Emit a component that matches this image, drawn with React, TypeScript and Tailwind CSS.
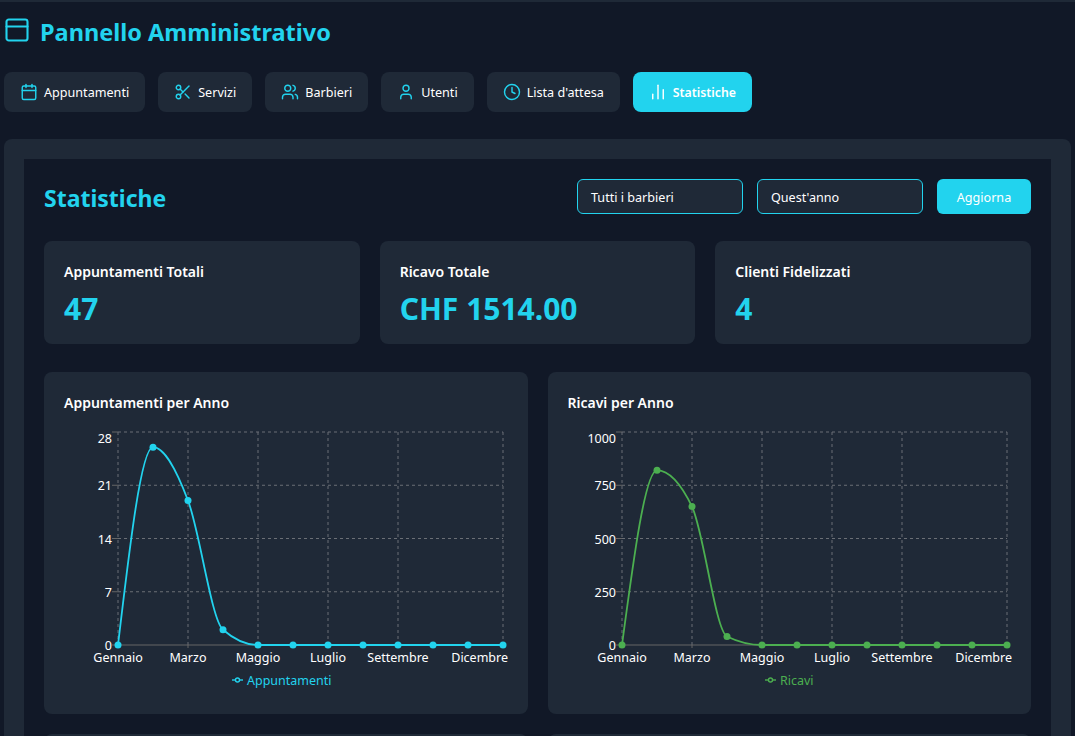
import { Calendar, ChartNoAxesColumn, Clock, PanelTop, Scissors, User, Users } from "lucide-react";

const tabs = [
  { label: "Appuntamenti", icon: Calendar },
  { label: "Servizi", icon: Scissors },
  { label: "Barbieri", icon: Users },
  { label: "Utenti", icon: User },
  { label: "Lista d'attesa", icon: Clock },
  { label: "Statistiche", icon: ChartNoAxesColumn, active: true },
];

const stats = [
  { label: "Appuntamenti Totali", value: "47" },
  { label: "Ricavo Totale", value: "CHF 1514.00" },
  { label: "Clienti Fidelizzati", value: "4" },
];

const PLOT_LEFT = 54;
const PLOT_TOP = 5;
const PLOT_W = 385;
const PLOT_H = 213;
const STEP = PLOT_W / 11;
const xLabels = [
  { i: 0, text: "Gennaio" },
  { i: 2, text: "Marzo" },
  { i: 4, text: "Maggio" },
  { i: 6, text: "Luglio" },
  { i: 8, text: "Settembre" },
  { i: 11, text: "Dicembre" },
];

// same shape as a monotone line chart (d3 curveMonotoneX)
function monotonePath(pts: { x: number; y: number }[]) {
  const n = pts.length;
  const slopes: number[] = [];
  for (let i = 0; i < n - 1; i++) {
    slopes.push((pts[i + 1].y - pts[i].y) / (pts[i + 1].x - pts[i].x));
  }
  const t: number[] = new Array(n).fill(0);
  for (let i = 1; i < n - 1; i++) {
    const a = slopes[i - 1];
    const b = slopes[i];
    const sign = (Math.sign(a) || 1) + (Math.sign(b) || 1);
    t[i] = sign * Math.min(Math.abs(a), Math.abs(b), 0.25 * Math.abs(a + b)) || 0;
  }
  t[0] = (3 * slopes[0] - t[1]) / 2;
  t[n - 1] = (3 * slopes[n - 2] - t[n - 2]) / 2;
  let d = `M${pts[0].x},${pts[0].y}`;
  for (let i = 0; i < n - 1; i++) {
    const h = (pts[i + 1].x - pts[i].x) / 3;
    d += `C${pts[i].x + h},${pts[i].y + h * t[i]} ${pts[i + 1].x - h},${pts[i + 1].y - h * t[i + 1]} ${pts[i + 1].x},${pts[i + 1].y}`;
  }
  return d;
}

function LineChartCard({
  title,
  name,
  color,
  max,
  ticks,
  data,
}: {
  title: string;
  name: string;
  color: string;
  max: number;
  ticks: number[];
  data: number[];
}) {
  const pts = data.map((v, i) => ({
    x: PLOT_LEFT + i * STEP,
    y: PLOT_TOP + PLOT_H - (v / max) * PLOT_H,
  }));
  const bottom = PLOT_TOP + PLOT_H;
  const right = PLOT_LEFT + PLOT_W;

  return (
    <div className="rounded-lg bg-[#1f2937] p-5">
      <h3 className="mb-[14px] pt-px text-[14px] leading-5 font-semibold text-white">{title}</h3>
      <svg width="444" height="267" className="block">
        {ticks.map((v) => {
          const y = bottom - (v / max) * PLOT_H;
          return (
            <g key={v}>
              {v > 0 && <line x1={PLOT_LEFT} x2={right} y1={y} y2={y} stroke="#6b6f76" strokeDasharray="3 3" />}
              <line x1={PLOT_LEFT - 6} x2={PLOT_LEFT} y1={y} y2={y} stroke="#666" />
              <text x={PLOT_LEFT - 6} y={y + (v === max ? 10.5 : 5)} textAnchor="end" fontSize="12.5" fill="#fff">
                {v}
              </text>
            </g>
          );
        })}
        {xLabels.map(({ i, text }) => {
          const x = PLOT_LEFT + i * STEP;
          return (
            <g key={text}>
              <line x1={x} x2={x} y1={PLOT_TOP} y2={bottom} stroke="#6b6f76" strokeDasharray="3 3" />
              <line x1={x} x2={x} y1={bottom} y2={bottom + 3} stroke="#666" />
              <text
                x={i === 11 ? 444 : x}
                y={bottom + 16.5}
                textAnchor={i === 11 ? "end" : "middle"}
                fontSize="12.5"
                fill="#fff"
              >
                {text}
              </text>
            </g>
          );
        })}
        <line x1={PLOT_LEFT} x2={right} y1={bottom} y2={bottom} stroke="#666" />
        <path d={monotonePath(pts)} fill="none" stroke={color} strokeWidth="1.8" />
        {pts.map((p, i) => (
          <circle key={i} cx={p.x} cy={p.y} r="3.5" fill={color} />
        ))}
        <g transform={`translate(${name === "Ricavi" ? 197 : 168} 253)`}>
          <line x1="0" x2="11" y1="0" y2="0" stroke={color} strokeWidth="1.4" />
          <circle cx="5.5" cy="0" r="2" fill="#1f2937" stroke={color} strokeWidth="1.4" />
          <text x="15" y="4.5" fontSize="12.5" fill={color}>
            {name}
          </text>
        </g>
      </svg>
    </div>
  );
}

export default function App() {
  return (
    <div
      className="h-[736px] overflow-hidden border-t-2 border-[#1f2937] bg-[#111827] px-1 text-white"
      style={{ fontFamily: '"Noto Sans", "Open Sans", sans-serif' }}
    >
      <header className="flex h-[60px] items-center gap-[9px]">
        <PanelTop className="-ml-[1px] mb-1 h-7 w-7 text-[#22d3ee]" strokeWidth={1.8} />
        <h1 className="pt-0.5 text-[23.5px] font-bold text-[#22d3ee]">Pannello Amministrativo</h1>
      </header>

      <nav className="mt-[10px] flex gap-[13px]">
        {tabs.map(({ label, icon: Icon, active }) => (
          <button
            key={label}
            className={`flex h-10 items-center gap-[6px] rounded-lg px-4 ${
              active ? "bg-[#22d3ee] text-[12.3px] font-semibold text-white" : "bg-[#1f2937] text-[12.6px] text-white"
            }`}
          >
            <Icon className={`h-[18px] w-[18px] ${active ? "text-white" : "text-[#22d3ee]"}`} strokeWidth={1.9} />
            <span className="pt-0.5">{label}</span>
          </button>
        ))}
      </nav>

      <main className="mt-[27px] rounded-lg bg-[#1f2937] p-5">
        <div className="bg-[#111827] p-5">
          <div className="flex h-[35px] items-center justify-between">
            <h2 className="pt-1 text-[23px] font-bold text-[#22d3ee]">Statistiche</h2>
            <div className="flex gap-[14px]">
              <div className="flex h-[35px] w-[166px] items-center rounded-md border border-[#22d3ee] bg-[#1f2937] px-[13px] pt-[3px] text-[12.6px]">
                Tutti i barbieri
              </div>
              <div className="flex h-[35px] w-[166px] items-center rounded-md border border-[#22d3ee] bg-[#1f2937] px-[13px] pt-[3px] text-[12.6px]">
                Quest'anno
              </div>
              <button className="h-[35px] w-[94px] rounded-md bg-[#22d3ee] pt-[3px] text-[12.6px] text-white">Aggiorna</button>
            </div>
          </div>

          <div className="mt-[27px] grid grid-cols-3 gap-5">
            {stats.map((s) => (
              <div key={s.label} className="h-[103px] rounded-lg bg-[#1f2937] p-5 pt-[21px]">
                <div className="text-[14px] leading-5 font-semibold text-white">{s.label}</div>
                <div className="mt-[7px] text-[30px] leading-10 font-bold text-[#22d3ee]">{s.value}</div>
              </div>
            ))}
          </div>

          <div className="mt-7 grid grid-cols-2 gap-5">
            <LineChartCard
              title="Appuntamenti per Anno"
              name="Appuntamenti"
              color="#22d3ee"
              max={28}
              ticks={[0, 7, 14, 21, 28]}
              data={[0, 26, 19, 2, 0, 0, 0, 0, 0, 0, 0, 0]}
            />
            <LineChartCard
              title="Ricavi per Anno"
              name="Ricavi"
              color="#4caf50"
              max={1000}
              ticks={[0, 250, 500, 750, 1000]}
              data={[0, 820, 650, 40, 0, 0, 0, 0, 0, 0, 0, 0]}
            />
          </div>

          <div className="mt-5 grid grid-cols-2 gap-5">
            <div className="h-40 rounded-lg bg-[#1f2937]" />
            <div className="h-40 rounded-lg bg-[#1f2937]" />
          </div>
        </div>
      </main>
    </div>
  );
}
